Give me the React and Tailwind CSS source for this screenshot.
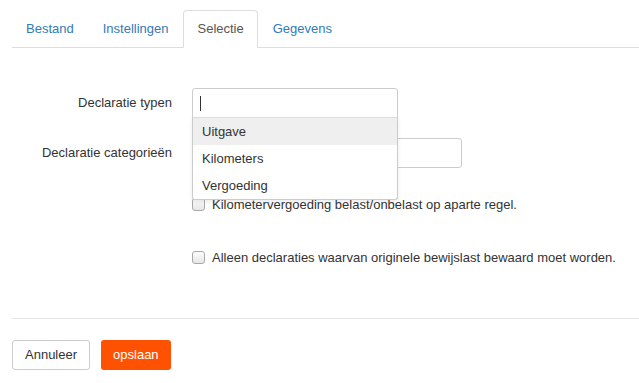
import React from 'react';

const tabs = ['Bestand', 'Instellingen', 'Selectie', 'Gegevens'];

const Checkbox = () => (
  <span className="inline-block w-[13px] h-[13px] rounded-[3px] border border-[#a9a9a9] bg-gradient-to-b from-[#fdfdfd] to-[#e6e6e6] shrink-0"></span>
);

const App = () => {
  return (
    <div className="w-[639px] h-[383px] bg-white text-[13px] text-[#333] overflow-hidden" style={{ fontFamily: '"Liberation Sans", Arial, sans-serif' }}>
      <div className="pl-[12px] pt-[10px]">
        {/* Tabs */}
        <div className="flex border-b border-[#ddd] h-[38px]">
          {tabs.map(t => (
            <div
              key={t}
              className={`px-[13px] mr-[1px] h-[38px] flex items-center leading-[18px] rounded-t-[4px] ${
                t === 'Selectie'
                  ? 'border border-[#ddd] border-b-white bg-white text-[#555] mb-[-1px]'
                  : 'text-[#337ab7] border border-transparent'
              }`}
            >
              {t}
            </div>
          ))}
        </div>

        {/* Form */}
        <div className="mt-[40px] relative">
          <div className="flex items-center h-[30px]">
            <div className="w-[160px] text-right">Declaratie typen</div>
            <div className="ml-[20px] relative">
              <div className="w-[206px] h-[30px] border border-[#ccc] rounded-t-[3px] bg-white flex items-center pl-[7px]">
                <span className="block w-px h-[15px] bg-[#333]"></span>
              </div>
              <div className="absolute left-0 top-[29px] w-[206px] bg-white border border-[#ccc] border-t-[#ddd] rounded-b-[3px] shadow-[0_2px_4px_rgba(0,0,0,0.08)] z-10">
                <div className="h-[27px] flex items-center pl-[9px] bg-[#efefef]">Uitgave</div>
                <div className="h-[27px] flex items-center pl-[9px]">Kilometers</div>
                <div className="h-[27px] flex items-center pl-[9px]">Vergoeding</div>
              </div>
            </div>
          </div>

          <div className="flex items-center h-[30px] mt-[20px]">
            <div className="w-[160px] text-right">Declaratie categorieën</div>
            <div className="ml-[20px] w-[270px] h-[30px] border border-[#ccc] rounded-[3px]"></div>
          </div>

          <div className="flex items-center ml-[180px] mt-[27px] gap-[7px]">
            <Checkbox />
            <span>Kilometervergoeding belast/onbelast op aparte regel.</span>
          </div>

          <div className="flex items-center ml-[180px] mt-[33px] gap-[7px]">
            <Checkbox />
            <span>Alleen declaraties waarvan originele bewijslast bewaard moet worden.</span>
          </div>
        </div>

        <div className="border-t border-[#e5e5e5] mt-[51px]"></div>

        <div className="flex gap-[11px] mt-[21px]">
          <button className="h-[30px] px-[12px] border border-[#ccc] rounded-[3px] bg-white text-[#333] text-[13px]">Annuleer</button>
          <button className="h-[30px] px-[12px] rounded-[3px] bg-[#ff5200] text-white text-[13px]">opslaan</button>
        </div>
      </div>
    </div>
  );
};

export default App;
